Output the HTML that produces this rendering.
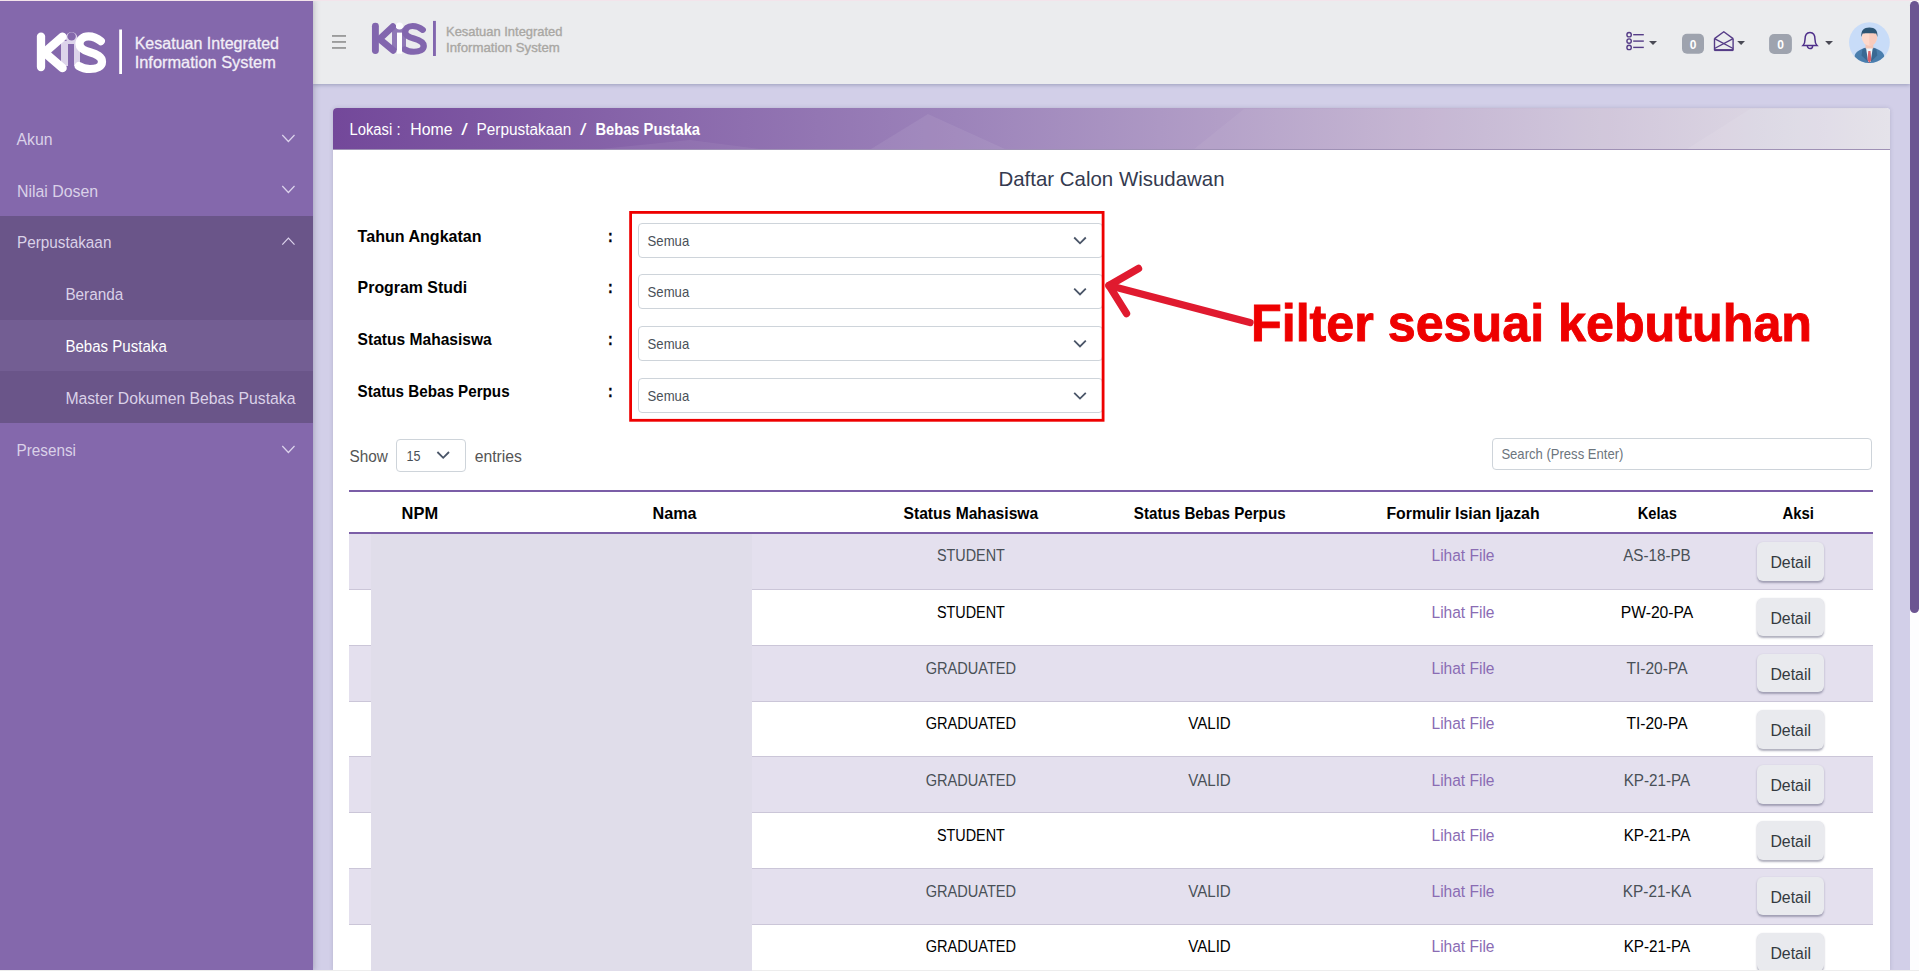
<!DOCTYPE html>
<html><head><meta charset="utf-8">
<style>
*{box-sizing:border-box;margin:0;padding:0}
html,body{width:1919px;height:971px;overflow:hidden;background:#D2CFE8;font-family:"Liberation Sans",sans-serif}
.abs{position:absolute}
svg text{font-family:"Liberation Sans",sans-serif}
</style></head><body>
<div class="abs" style="left:313px;top:0;width:1597px;height:84px;background:#EBECEE;box-shadow:0 1px 4px rgba(70,80,120,.4)"></div>
<div class="abs" style="left:0;top:0;width:313px;height:971px;background:#8468AC;box-shadow:1px 0 6px rgba(40,40,60,.25)"></div>
<div class="abs" style="left:0;top:216px;width:313px;height:207px;background:#6A5589"></div>
<div class="abs" style="left:0;top:320px;width:313px;height:51.3px;background:#735E93"></div>
<div class="abs" style="left:1910px;top:0;width:9px;height:971px;background:#FDFDFE"></div>
<div class="abs" style="left:1910px;top:1px;width:9px;height:612px;background:#6C5592;border-radius:5px"></div>
<div class="abs" style="left:333px;top:108px;width:1557px;height:863px;background:#fff;border-radius:4px 4px 0 0;box-shadow:0 0 4px rgba(60,60,90,.18)"></div>
<div class="abs" style="left:333px;top:108px;width:1557px;height:42px;border-radius:4px 4px 0 0;background:linear-gradient(90deg,#73489A 0%,#9C83BA 40%,#C3B3D1 70%,#E2E0E8 100%);border-bottom:1px solid #9F91B5"></div>
<div class="abs" style="left:638.3px;top:223.1px;width:465px;height:34.6px;border:1px solid #CED4DA;border-radius:4px;background:#fff"></div>
<div class="abs" style="left:638.3px;top:274.3px;width:465px;height:34.6px;border:1px solid #CED4DA;border-radius:4px;background:#fff"></div>
<div class="abs" style="left:638.3px;top:326.3px;width:465px;height:34.6px;border:1px solid #CED4DA;border-radius:4px;background:#fff"></div>
<div class="abs" style="left:638.3px;top:378.4px;width:465px;height:34.6px;border:1px solid #CED4DA;border-radius:4px;background:#fff"></div>
<div class="abs" style="left:396.3px;top:438.5px;width:69.4px;height:33.8px;border:1px solid #CED4DA;border-radius:4px;background:#fff"></div>
<div class="abs" style="left:1491.8px;top:438px;width:380.6px;height:32px;border:1px solid #CED4DA;border-radius:4px;background:#fff"></div>
<div class="abs" style="left:349px;top:490px;width:1524px;height:2px;background:#7B5EA7"></div>
<div class="abs" style="left:349px;top:532px;width:1524px;height:2px;background:#7B5EA7"></div>
<div class="abs" style="left:349px;top:534.0px;width:1524px;height:54.8px;background:#E4E0EE"></div>
<div class="abs" style="left:349px;top:588.8px;width:1524px;height:1px;background:#CBC6D8"></div>
<div class="abs" style="left:1757px;top:542.1px;width:67px;height:38.5px;background:#E9EAEE;border-radius:6px;box-shadow:0 1.5px 2px rgba(80,80,110,.45)"></div>
<div class="abs" style="left:349px;top:589.8px;width:1524px;height:55.0px;background:#FFFFFF"></div>
<div class="abs" style="left:349px;top:644.8px;width:1524px;height:1px;background:#CBC6D8"></div>
<div class="abs" style="left:1757px;top:597.9px;width:67px;height:38.5px;background:#E9EAEE;border-radius:6px;box-shadow:0 1.5px 2px rgba(80,80,110,.45)"></div>
<div class="abs" style="left:349px;top:645.8px;width:1524px;height:55.1px;background:#E4E0EE"></div>
<div class="abs" style="left:349px;top:700.9px;width:1524px;height:1px;background:#CBC6D8"></div>
<div class="abs" style="left:1757px;top:653.9px;width:67px;height:38.5px;background:#E9EAEE;border-radius:6px;box-shadow:0 1.5px 2px rgba(80,80,110,.45)"></div>
<div class="abs" style="left:349px;top:701.9px;width:1524px;height:54.1px;background:#FFFFFF"></div>
<div class="abs" style="left:349px;top:756.0px;width:1524px;height:1px;background:#CBC6D8"></div>
<div class="abs" style="left:1757px;top:710.0px;width:67px;height:38.5px;background:#E9EAEE;border-radius:6px;box-shadow:0 1.5px 2px rgba(80,80,110,.45)"></div>
<div class="abs" style="left:349px;top:757.0px;width:1524px;height:55.0px;background:#E4E0EE"></div>
<div class="abs" style="left:349px;top:812.0px;width:1524px;height:1px;background:#CBC6D8"></div>
<div class="abs" style="left:1757px;top:765.1px;width:67px;height:38.5px;background:#E9EAEE;border-radius:6px;box-shadow:0 1.5px 2px rgba(80,80,110,.45)"></div>
<div class="abs" style="left:349px;top:813.0px;width:1524px;height:54.8px;background:#FFFFFF"></div>
<div class="abs" style="left:349px;top:867.8px;width:1524px;height:1px;background:#CBC6D8"></div>
<div class="abs" style="left:1757px;top:821.1px;width:67px;height:38.5px;background:#E9EAEE;border-radius:6px;box-shadow:0 1.5px 2px rgba(80,80,110,.45)"></div>
<div class="abs" style="left:349px;top:868.8px;width:1524px;height:55.0px;background:#E4E0EE"></div>
<div class="abs" style="left:349px;top:923.8px;width:1524px;height:1px;background:#CBC6D8"></div>
<div class="abs" style="left:1757px;top:876.9px;width:67px;height:38.5px;background:#E9EAEE;border-radius:6px;box-shadow:0 1.5px 2px rgba(80,80,110,.45)"></div>
<div class="abs" style="left:349px;top:924.8px;width:1524px;height:54.8px;background:#FFFFFF"></div>
<div class="abs" style="left:349px;top:979.6px;width:1524px;height:1px;background:#CBC6D8"></div>
<div class="abs" style="left:1757px;top:932.9px;width:67px;height:38.5px;background:#E9EAEE;border-radius:6px;box-shadow:0 1.5px 2px rgba(80,80,110,.45)"></div>
<div class="abs" style="left:0;top:0;width:1919px;height:1px;background:#F3E4EB"></div>
<div class="abs" style="left:0;top:970px;width:1919px;height:1px;background:#EDEDED"></div>
<div class="abs" style="left:370.6px;top:534px;width:381px;height:437px;background:#E0DDEA"></div>
<svg class="abs" style="left:0;top:0" width="1919" height="971">
<rect x="61" y="41" width="19" height="25" fill="#DCD3EA"/>
<circle cx="71.6" cy="37.8" r="5.8" fill="#DCD3EA"/>
<line x1="41" y1="36.6" x2="41" y2="67" stroke="#FFFFFF" stroke-width="8.3" stroke-linecap="round"/>
<polyline points="62.5,36.8 44.5,52.5 62.5,68" fill="none" stroke="#FFFFFF" stroke-width="8.6" stroke-linecap="round" stroke-linejoin="miter"/>
<path d="M100.8,41.2 C97,38 92.5,36.4 88.5,36.4 C82.5,36.4 79.5,40 79.5,44 C79.5,48.5 84,50.5 90,52.2 C97,54.2 102,56.5 102,61.7 C102,66.7 96.5,69 90,69 C85,69 81.5,67.8 78.8,66" fill="none" stroke="#FFFFFF" stroke-width="8.2" stroke-linecap="round"/>
<rect x="68" y="44" width="6" height="27" fill="#8468AC"/>
<circle cx="71.6" cy="36.4" r="4.2" fill="#8468AC"/>
<rect x="119.2" y="29.5" width="2.8" height="44.5" fill="#FFFFFF"/>
<text x="134.7" y="48.8" font-size="16.5" fill="#F2EEF7" text-anchor="start" textLength="144.3" lengthAdjust="spacingAndGlyphs" stroke="#F2EEF7" stroke-width="0.3">Kesatuan Integrated</text>
<text x="134.7" y="68" font-size="16.5" fill="#F2EEF7" text-anchor="start" textLength="141.1" lengthAdjust="spacingAndGlyphs" stroke="#F2EEF7" stroke-width="0.3">Information System</text>
<text x="16.5" y="144.8" font-size="16.3" fill="#DAD1E8" text-anchor="start" textLength="36" lengthAdjust="spacingAndGlyphs">Akun</text>
<text x="17" y="196.8" font-size="16.3" fill="#DAD1E8" text-anchor="start" textLength="81.2" lengthAdjust="spacingAndGlyphs">Nilai Dosen</text>
<text x="17" y="248" font-size="16.3" fill="#DAD1E8" text-anchor="start" textLength="94.4" lengthAdjust="spacingAndGlyphs">Perpustakaan</text>
<text x="65.4" y="300" font-size="16.3" fill="#DAD1E8" text-anchor="start" textLength="57.9" lengthAdjust="spacingAndGlyphs">Beranda</text>
<text x="65.4" y="352" font-size="16.3" fill="#FFFFFF" text-anchor="start" textLength="101.4" lengthAdjust="spacingAndGlyphs">Bebas Pustaka</text>
<text x="65.4" y="403.5" font-size="16.3" fill="#DAD1E8" text-anchor="start" textLength="230" lengthAdjust="spacingAndGlyphs">Master Dokumen Bebas Pustaka</text>
<text x="16.5" y="455.5" font-size="16.3" fill="#DAD1E8" text-anchor="start" textLength="59.5" lengthAdjust="spacingAndGlyphs">Presensi</text>
<polyline points="282.3,135.0 288.4,141.5 294.5,135.0" fill="none" stroke="#DCD3EC" stroke-width="1.2"/>
<polyline points="282.3,186.0 288.4,192.5 294.5,186.0" fill="none" stroke="#DCD3EC" stroke-width="1.2"/>
<polyline points="282.3,446.0 288.4,452.5 294.5,446.0" fill="none" stroke="#DCD3EC" stroke-width="1.2"/>
<polyline points="282.3,244.6 288.4,238.2 294.5,244.6" fill="none" stroke="#DCD3EC" stroke-width="1.2"/>
<rect x="392" y="28" width="14" height="22" fill="#8F78B6"/>
<line x1="375.4" y1="26.3" x2="375.4" y2="50.5" stroke="#8266AE" stroke-width="6.9" stroke-linecap="round"/>
<polyline points="392.8,26.6 379.5,39 393.2,50.4" fill="none" stroke="#8266AE" stroke-width="6.6" stroke-linecap="round"/>
<path transform="matrix(0.822,0,0,0.791,339.85,-2.79)" d="M100.8,41.2 C97,38 92.5,36.4 88.5,36.4 C82.5,36.4 79.5,40 79.5,44 C79.5,48.5 84,50.5 90,52.2 C97,54.2 102,56.5 102,61.7 C102,66.7 96.5,69 90,69 C85,69 81.5,67.8 78.8,66" fill="none" stroke="#8266AE" stroke-width="7.8" stroke-linecap="round"/>
<rect x="397" y="32.6" width="5" height="21.1" fill="#FFFFFF"/>
<circle cx="399.5" cy="26.1" r="3.5" fill="#FDFCFF"/>
<rect x="433" y="20.9" width="2.9" height="35.1" fill="#8266AE"/>
<g transform="translate(313,0)"><g fill="#888888"><rect x="19" y="35.2" width="14" height="1.5"/><rect x="19" y="41.2" width="14" height="1.5"/><rect x="19" y="47.2" width="14" height="1.5"/></g>
<text x="133" y="36" font-size="12.9" fill="#A9A7A3" text-anchor="start" textLength="116.5" lengthAdjust="spacingAndGlyphs" stroke="#A9A7A3" stroke-width="0.35">Kesatuan Integrated</text>
<text x="133" y="51.7" font-size="12.9" fill="#A9A7A3" text-anchor="start" textLength="113.8" lengthAdjust="spacingAndGlyphs" stroke="#A9A7A3" stroke-width="0.35">Information System</text>
<g fill="none" stroke="#553C87" stroke-width="1.4">
<circle cx="1316.1" cy="34.7" r="2.2"/><circle cx="1316.1" cy="41.1" r="2.2"/><circle cx="1316.1" cy="47.4" r="2.2"/>
</g>
<g fill="#553C87"><rect x="1320.2" y="34" width="10.6" height="1.4"/><rect x="1320.2" y="40.4" width="10.6" height="1.4"/><rect x="1320.2" y="46.7" width="10.6" height="1.4"/></g>
<g fill="#4A4A55"><polygon points="1336,41 1344,41 1340,45"/><polygon points="1424.2,41 1432,41 1428.1,45"/><polygon points="1512.1,41 1520,41 1516,45"/></g>
<rect x="1369" y="33.8" width="22" height="20" rx="5" fill="#9EA3AE"/>
<rect x="1456.1" y="34" width="22.8" height="20" rx="5" fill="#9EA3AE"/>
<text x="1380" y="49" fill="#FFFFFF" font-size="12" font-weight="bold" text-anchor="middle">0</text>
<text x="1467.5" y="49" fill="#FFFFFF" font-size="12" font-weight="bold" text-anchor="middle">0</text>
<g fill="none" stroke="#553C87" stroke-width="1.4" stroke-linejoin="round">
<polyline points="1401.5,38.6 1410.8,31.8 1420.1,38.6"/>
<polyline points="1401.5,38.6 1401.5,50 1420.1,50 1420.1,38.6"/><line x1="1401.5" y1="50.2" x2="1420.1" y2="50.2" stroke-width="1.8"/>
<polyline points="1401.5,38.6 1420.1,48.5"/><polyline points="1420.1,38.6 1401.5,48.5"/>
</g>
<g fill="none" stroke="#4E2F8A" stroke-width="1.5">
<path d="M1490,45.5 C1491.5,44 1492,42.5 1492,39.5 C1492,35 1494,32.6 1497,32.6 C1500,32.6 1502,35 1502,39.5 C1502,42.5 1502.5,44 1504,45.5 Z"/>
<path d="M1494.4,46 A2.6,2.6 0 0 0 1499.6,46"/>
</g>
</g>
<clipPath id="av"><circle cx="1869.4" cy="42.6" r="20.4"/></clipPath>
<g clip-path="url(#av)">
<rect x="1849" y="22" width="41" height="42" fill="#C8DCF8"/>
<path d="M1876,22 A20.4,20.4 0 0 1 1876,63.4 A22,22 0 0 0 1876,22Z" fill="#BAD2F6"/>
<path d="M1854.5,66 L1854.5,57.5 C1854.5,52.5 1858,50.5 1865,47.8 L1874,47.8 C1881,50.5 1884.3,52.5 1884.3,57.5 L1884.3,66 Z" fill="#4A7EAD"/>
<polygon points="1862.5,49 1866.5,47.8 1869.4,63 1861.5,55.5" fill="#3A6993"/>
<polygon points="1876.3,49 1872.3,47.8 1869.4,63 1877.3,55.5" fill="#3A6993"/>
<polygon points="1866,47.8 1872.8,47.8 1870.6,62 1868.2,62" fill="#EEF5FB"/>
<polygon points="1868.3,51 1870.5,51 1871.3,60 1869.4,63 1867.5,60" fill="#D9646B"/>
<rect x="1865.5" y="42" width="7.8" height="6.5" fill="#F3C6B7"/>
<ellipse cx="1869.4" cy="37.3" rx="7.6" ry="8.4" fill="#FDD9CC"/>
<path d="M1869.4,29 C1873,29 1877,31 1877,37.3 C1877,42 1874,45.7 1869.4,45.7 Z" fill="#F8CBBD"/>
<path d="M1861.4,37 C1860.8,30 1863.8,27.4 1869.4,27.4 C1875,27.4 1878,30 1877.4,37 L1876.2,33.6 C1873,33.2 1865.8,33.2 1862.6,33.6 Z" fill="#2D5574"/>
</g>
<g fill="#FFFFFF"><polygon points="871,149 928,114 1005,149" opacity="0.07"/><polygon points="1194,149 1244,109 1890,109 1890,149" opacity="0.05"/><polygon points="1687,149 1750,109 1890,109 1890,149" opacity="0.08"/><polygon points="600,149 690,140 760,149" opacity="0.06"/></g>
<text x="349.5" y="134.8" font-size="16" fill="#FFFFFF" text-anchor="start" textLength="51" lengthAdjust="spacingAndGlyphs">Lokasi :</text>
<text x="410.3" y="134.8" font-size="16" fill="#FFFFFF" text-anchor="start" textLength="42.2" lengthAdjust="spacingAndGlyphs">Home</text>
<text x="461.2" y="134.8" font-size="16" fill="#FFFFFF" text-anchor="start" textLength="6.5" lengthAdjust="spacingAndGlyphs">/</text>
<text x="476.6" y="134.8" font-size="16" fill="#FFFFFF" text-anchor="start" textLength="94.7" lengthAdjust="spacingAndGlyphs">Perpustakaan</text>
<text x="580" y="134.8" font-size="16" fill="#FFFFFF" text-anchor="start" textLength="6.5" lengthAdjust="spacingAndGlyphs">/</text>
<text x="595.4" y="134.8" font-size="16" font-weight="bold" fill="#FFFFFF" text-anchor="start" textLength="104.6" lengthAdjust="spacingAndGlyphs">Bebas Pustaka</text>
<text x="998.5" y="185.7" font-size="20.3" fill="#343A4F" text-anchor="start" textLength="226" lengthAdjust="spacingAndGlyphs">Daftar Calon Wisudawan</text>
<text x="357.6" y="241.7" font-size="16.3" font-weight="bold" fill="#000000" text-anchor="start" textLength="124" lengthAdjust="spacingAndGlyphs">Tahun Angkatan</text>
<text x="608.3" y="241.7" font-size="16.3" font-weight="bold" fill="#000000" text-anchor="start" textLength="4.2" lengthAdjust="spacingAndGlyphs" stroke="#000" stroke-width="0.6">:</text>
<text x="647.6" y="245.79999999999998" font-size="14.3" fill="#495057" text-anchor="start" textLength="41.6" lengthAdjust="spacingAndGlyphs">Semua</text>
<polyline points="1074.2,237.5 1080,243.29999999999998 1085.8,237.5" fill="none" stroke="#4A5568" stroke-width="1.8"/>
<text x="357.6" y="292.90000000000003" font-size="16.3" font-weight="bold" fill="#000000" text-anchor="start" textLength="109.5" lengthAdjust="spacingAndGlyphs">Program Studi</text>
<text x="608.3" y="292.90000000000003" font-size="16.3" font-weight="bold" fill="#000000" text-anchor="start" textLength="4.2" lengthAdjust="spacingAndGlyphs" stroke="#000" stroke-width="0.6">:</text>
<text x="647.6" y="297.0" font-size="14.3" fill="#495057" text-anchor="start" textLength="41.6" lengthAdjust="spacingAndGlyphs">Semua</text>
<polyline points="1074.2,288.7 1080,294.5 1085.8,288.7" fill="none" stroke="#4A5568" stroke-width="1.8"/>
<text x="357.6" y="344.90000000000003" font-size="16.3" font-weight="bold" fill="#000000" text-anchor="start" textLength="134.2" lengthAdjust="spacingAndGlyphs">Status Mahasiswa</text>
<text x="608.3" y="344.90000000000003" font-size="16.3" font-weight="bold" fill="#000000" text-anchor="start" textLength="4.2" lengthAdjust="spacingAndGlyphs" stroke="#000" stroke-width="0.6">:</text>
<text x="647.6" y="349.0" font-size="14.3" fill="#495057" text-anchor="start" textLength="41.6" lengthAdjust="spacingAndGlyphs">Semua</text>
<polyline points="1074.2,340.7 1080,346.5 1085.8,340.7" fill="none" stroke="#4A5568" stroke-width="1.8"/>
<text x="357.6" y="397.0" font-size="16.3" font-weight="bold" fill="#000000" text-anchor="start" textLength="152" lengthAdjust="spacingAndGlyphs">Status Bebas Perpus</text>
<text x="608.3" y="397.0" font-size="16.3" font-weight="bold" fill="#000000" text-anchor="start" textLength="4.2" lengthAdjust="spacingAndGlyphs" stroke="#000" stroke-width="0.6">:</text>
<text x="647.6" y="401.09999999999997" font-size="14.3" fill="#495057" text-anchor="start" textLength="41.6" lengthAdjust="spacingAndGlyphs">Semua</text>
<polyline points="1074.2,392.79999999999995 1080,398.59999999999997 1085.8,392.79999999999995" fill="none" stroke="#4A5568" stroke-width="1.8"/>
<rect x="630.6" y="212.4" width="472.5" height="207.9" fill="none" stroke="#EE0000" stroke-width="2.8"/>
<g fill="none" stroke="#E01A2F" stroke-width="7.4" stroke-linecap="round" stroke-linejoin="round"><polyline points="1138.5,268.5 1109,285.5 1126.5,313.5"/><line x1="1109" y1="285.5" x2="1250" y2="322.5"/></g>
<text x="1251" y="340.9" font-size="51.5" font-weight="bold" fill="#EE0000" text-anchor="start" textLength="561" lengthAdjust="spacingAndGlyphs" stroke="#EE0000" stroke-width="0.9">Filter sesuai kebutuhan</text>
<text x="349.4" y="461.5" font-size="16.3" fill="#555555" text-anchor="start" textLength="38.4" lengthAdjust="spacingAndGlyphs">Show</text>
<text x="406.6" y="460.5" font-size="14.3" fill="#495057" text-anchor="start" textLength="14" lengthAdjust="spacingAndGlyphs">15</text>
<polyline points="437.4,452 443.2,457.8 449,452" fill="none" stroke="#4A5568" stroke-width="1.8"/>
<text x="474.7" y="461.5" font-size="16.3" fill="#555555" text-anchor="start" textLength="47.3" lengthAdjust="spacingAndGlyphs">entries</text>
<text x="1501.4" y="458.8" font-size="14.3" fill="#6C757D" text-anchor="start" textLength="122" lengthAdjust="spacingAndGlyphs">Search (Press Enter)</text>
<text x="401.6" y="518.9" font-size="16.3" font-weight="bold" fill="#000000" text-anchor="start" textLength="36.5" lengthAdjust="spacingAndGlyphs">NPM</text>
<text x="652.5" y="518.9" font-size="16.3" font-weight="bold" fill="#000000" text-anchor="start" textLength="44.1" lengthAdjust="spacingAndGlyphs">Nama</text>
<text x="903.5" y="518.9" font-size="16.3" font-weight="bold" fill="#000000" text-anchor="start" textLength="134.7" lengthAdjust="spacingAndGlyphs">Status Mahasiswa</text>
<text x="1133.8" y="518.9" font-size="16.3" font-weight="bold" fill="#000000" text-anchor="start" textLength="151.8" lengthAdjust="spacingAndGlyphs">Status Bebas Perpus</text>
<text x="1386.4" y="518.9" font-size="16.3" font-weight="bold" fill="#000000" text-anchor="start" textLength="153.2" lengthAdjust="spacingAndGlyphs">Formulir Isian Ijazah</text>
<text x="1637.7" y="518.9" font-size="16.3" font-weight="bold" fill="#000000" text-anchor="start" textLength="39.2" lengthAdjust="spacingAndGlyphs">Kelas</text>
<text x="1782.4" y="518.9" font-size="16.3" font-weight="bold" fill="#000000" text-anchor="start" textLength="31.6" lengthAdjust="spacingAndGlyphs">Aksi</text>
<text x="970.9" y="561" font-size="16.3" fill="#495057" text-anchor="middle" textLength="68" lengthAdjust="spacingAndGlyphs">STUDENT</text>
<text x="1463" y="561" font-size="16.3" fill="#8A6CB4" text-anchor="middle" textLength="63" lengthAdjust="spacingAndGlyphs">Lihat File</text>
<text x="1657" y="561" font-size="16.3" fill="#495057" text-anchor="middle" textLength="67.5" lengthAdjust="spacingAndGlyphs">AS-18-PB</text>
<text x="1790.7" y="567.8" font-size="16.3" fill="#343A40" text-anchor="middle" textLength="40.5" lengthAdjust="spacingAndGlyphs">Detail</text>
<text x="970.9" y="617.6" font-size="16.3" fill="#000000" text-anchor="middle" textLength="68" lengthAdjust="spacingAndGlyphs">STUDENT</text>
<text x="1463" y="617.6" font-size="16.3" fill="#8A6CB4" text-anchor="middle" textLength="63" lengthAdjust="spacingAndGlyphs">Lihat File</text>
<text x="1657" y="617.6" font-size="16.3" fill="#000000" text-anchor="middle" textLength="72.6" lengthAdjust="spacingAndGlyphs">PW-20-PA</text>
<text x="1790.7" y="623.5999999999999" font-size="16.3" fill="#343A40" text-anchor="middle" textLength="40.5" lengthAdjust="spacingAndGlyphs">Detail</text>
<text x="970.9" y="673.9" font-size="16.3" fill="#495057" text-anchor="middle" textLength="90.5" lengthAdjust="spacingAndGlyphs">GRADUATED</text>
<text x="1463" y="673.9" font-size="16.3" fill="#8A6CB4" text-anchor="middle" textLength="63" lengthAdjust="spacingAndGlyphs">Lihat File</text>
<text x="1657" y="673.9" font-size="16.3" fill="#495057" text-anchor="middle" textLength="61" lengthAdjust="spacingAndGlyphs">TI-20-PA</text>
<text x="1790.7" y="679.5999999999999" font-size="16.3" fill="#343A40" text-anchor="middle" textLength="40.5" lengthAdjust="spacingAndGlyphs">Detail</text>
<text x="970.9" y="729.4" font-size="16.3" fill="#000000" text-anchor="middle" textLength="90.5" lengthAdjust="spacingAndGlyphs">GRADUATED</text>
<text x="1209.5" y="729.4" font-size="16.3" fill="#000000" text-anchor="middle" textLength="42.5" lengthAdjust="spacingAndGlyphs">VALID</text>
<text x="1463" y="729.4" font-size="16.3" fill="#8A6CB4" text-anchor="middle" textLength="63" lengthAdjust="spacingAndGlyphs">Lihat File</text>
<text x="1657" y="729.4" font-size="16.3" fill="#000000" text-anchor="middle" textLength="61" lengthAdjust="spacingAndGlyphs">TI-20-PA</text>
<text x="1790.7" y="735.6999999999999" font-size="16.3" fill="#343A40" text-anchor="middle" textLength="40.5" lengthAdjust="spacingAndGlyphs">Detail</text>
<text x="970.9" y="785.5" font-size="16.3" fill="#495057" text-anchor="middle" textLength="90.5" lengthAdjust="spacingAndGlyphs">GRADUATED</text>
<text x="1209.5" y="785.5" font-size="16.3" fill="#495057" text-anchor="middle" textLength="42.5" lengthAdjust="spacingAndGlyphs">VALID</text>
<text x="1463" y="785.5" font-size="16.3" fill="#8A6CB4" text-anchor="middle" textLength="63" lengthAdjust="spacingAndGlyphs">Lihat File</text>
<text x="1657" y="785.5" font-size="16.3" fill="#495057" text-anchor="middle" textLength="66.6" lengthAdjust="spacingAndGlyphs">KP-21-PA</text>
<text x="1790.7" y="790.8" font-size="16.3" fill="#343A40" text-anchor="middle" textLength="40.5" lengthAdjust="spacingAndGlyphs">Detail</text>
<text x="970.9" y="840.6" font-size="16.3" fill="#000000" text-anchor="middle" textLength="68" lengthAdjust="spacingAndGlyphs">STUDENT</text>
<text x="1463" y="840.6" font-size="16.3" fill="#8A6CB4" text-anchor="middle" textLength="63" lengthAdjust="spacingAndGlyphs">Lihat File</text>
<text x="1657" y="840.6" font-size="16.3" fill="#000000" text-anchor="middle" textLength="66.6" lengthAdjust="spacingAndGlyphs">KP-21-PA</text>
<text x="1790.7" y="846.8" font-size="16.3" fill="#343A40" text-anchor="middle" textLength="40.5" lengthAdjust="spacingAndGlyphs">Detail</text>
<text x="970.9" y="896.7" font-size="16.3" fill="#495057" text-anchor="middle" textLength="90.5" lengthAdjust="spacingAndGlyphs">GRADUATED</text>
<text x="1209.5" y="896.7" font-size="16.3" fill="#495057" text-anchor="middle" textLength="42.5" lengthAdjust="spacingAndGlyphs">VALID</text>
<text x="1463" y="896.7" font-size="16.3" fill="#8A6CB4" text-anchor="middle" textLength="63" lengthAdjust="spacingAndGlyphs">Lihat File</text>
<text x="1657" y="896.7" font-size="16.3" fill="#495057" text-anchor="middle" textLength="68.3" lengthAdjust="spacingAndGlyphs">KP-21-KA</text>
<text x="1790.7" y="902.5999999999999" font-size="16.3" fill="#343A40" text-anchor="middle" textLength="40.5" lengthAdjust="spacingAndGlyphs">Detail</text>
<text x="970.9" y="952.3" font-size="16.3" fill="#000000" text-anchor="middle" textLength="90.5" lengthAdjust="spacingAndGlyphs">GRADUATED</text>
<text x="1209.5" y="952.3" font-size="16.3" fill="#000000" text-anchor="middle" textLength="42.5" lengthAdjust="spacingAndGlyphs">VALID</text>
<text x="1463" y="952.3" font-size="16.3" fill="#8A6CB4" text-anchor="middle" textLength="63" lengthAdjust="spacingAndGlyphs">Lihat File</text>
<text x="1657" y="952.3" font-size="16.3" fill="#000000" text-anchor="middle" textLength="66.6" lengthAdjust="spacingAndGlyphs">KP-21-PA</text>
<text x="1790.7" y="958.5999999999999" font-size="16.3" fill="#343A40" text-anchor="middle" textLength="40.5" lengthAdjust="spacingAndGlyphs">Detail</text>
</svg>
</body></html>
